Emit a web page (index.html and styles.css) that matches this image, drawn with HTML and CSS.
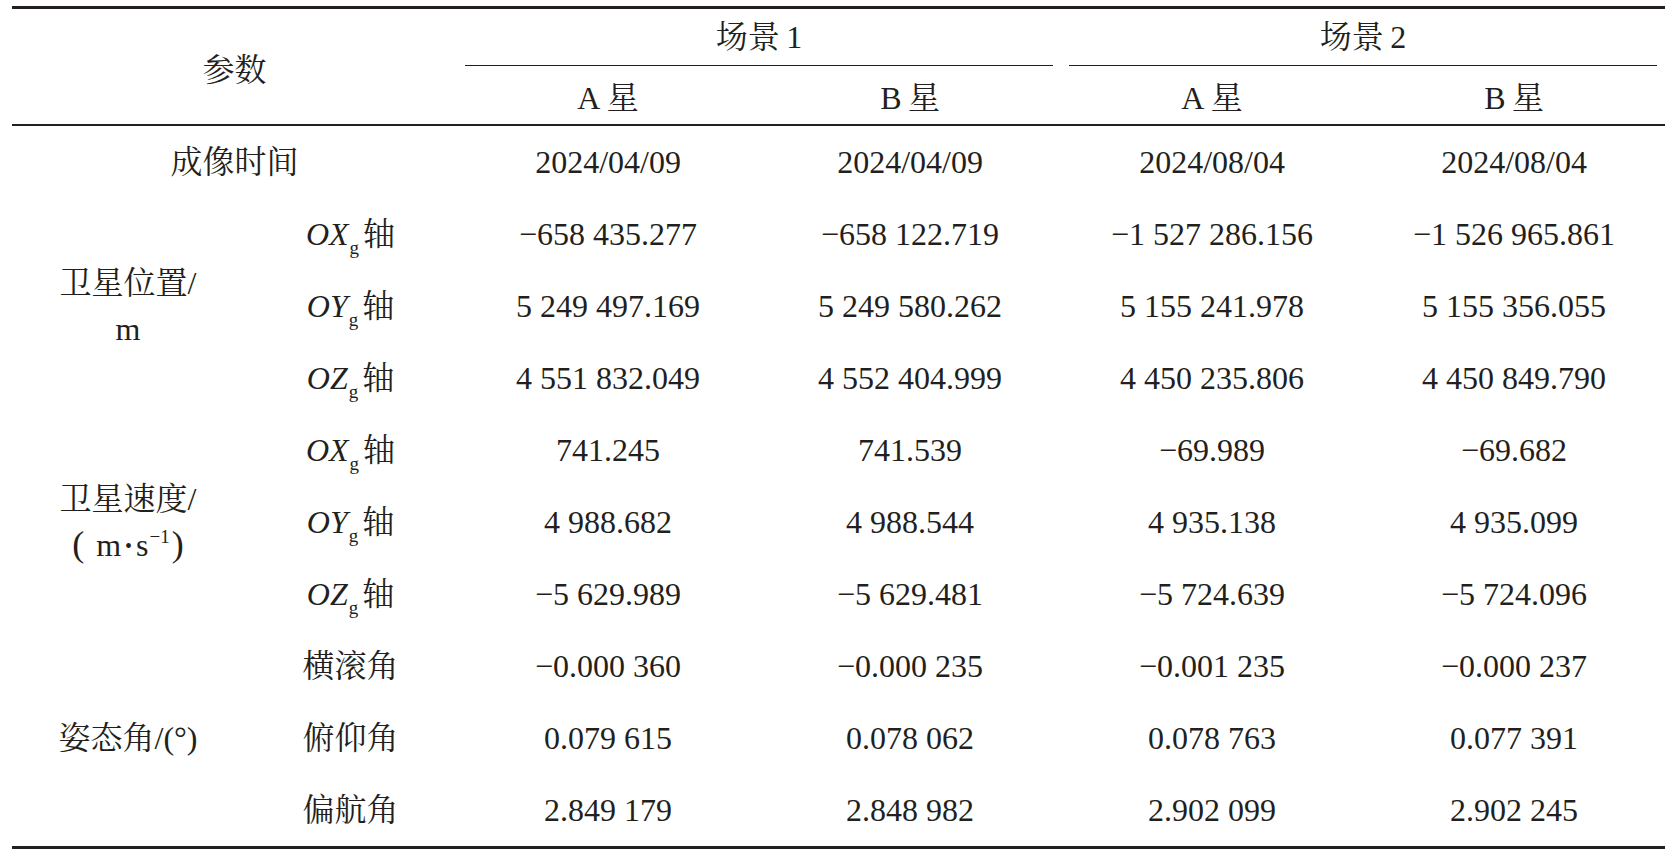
FILE: index.html
```html
<!DOCTYPE html>
<html lang="zh-CN">
<head>
<meta charset="utf-8">
<title>参数表</title>
<link rel="stylesheet" href="styles.css">
</head>
<body>
<table class="params">
  <colgroup>
    <col class="c-group"><col class="c-sub"><col class="c-data"><col class="c-data"><col class="c-data"><col class="c-data">
  </colgroup>
  <thead>
    <tr class="h1">
      <th colspan="2" rowspan="2" class="h-param">参数</th>
      <th colspan="2" class="grp"><div class="grp-label">场景&#8201;1</div></th>
      <th colspan="2" class="grp"><div class="grp-label">场景&#8201;2</div></th>
    </tr>
    <tr class="h2">
      <th>A&#8201;星</th><th>B&#8201;星</th><th>A&#8201;星</th><th>B&#8201;星</th>
    </tr>
  </thead>
  <tbody>
    <tr>
      <td colspan="2" class="lbl">成像时间</td>
      <td>2024/04/09</td><td>2024/04/09</td><td>2024/08/04</td><td>2024/08/04</td>
    </tr>
    <tr>
      <td rowspan="3" class="grp-cell">卫星位置/<br>m</td>
      <td class="sub"><i>OX</i><sub>g</sub>轴</td>
      <td>−658 435.277</td><td>−658 122.719</td><td>−1 527 286.156</td><td>−1 526 965.861</td>
    </tr>
    <tr>
      <td class="sub"><i>OY</i><sub>g</sub>轴</td>
      <td>5 249 497.169</td><td>5 249 580.262</td><td>5 155 241.978</td><td>5 155 356.055</td>
    </tr>
    <tr>
      <td class="sub"><i>OZ</i><sub>g</sub>轴</td>
      <td>4 551 832.049</td><td>4 552 404.999</td><td>4 450 235.806</td><td>4 450 849.790</td>
    </tr>
    <tr>
      <td rowspan="3" class="grp-cell">卫星速度/<br><span class="paren pl">(</span>m<span class="dot">•</span>s<sup>−1</sup><span class="paren pr">)</span></td>
      <td class="sub"><i>OX</i><sub>g</sub>轴</td>
      <td>741.245</td><td>741.539</td><td>−69.989</td><td>−69.682</td>
    </tr>
    <tr>
      <td class="sub"><i>OY</i><sub>g</sub>轴</td>
      <td>4 988.682</td><td>4 988.544</td><td>4 935.138</td><td>4 935.099</td>
    </tr>
    <tr>
      <td class="sub"><i>OZ</i><sub>g</sub>轴</td>
      <td>−5 629.989</td><td>−5 629.481</td><td>−5 724.639</td><td>−5 724.096</td>
    </tr>
    <tr>
      <td rowspan="3" class="grp-cell">姿态角/(°)</td>
      <td class="sub">横滚角</td>
      <td>−0.000 360</td><td>−0.000 235</td><td>−0.001 235</td><td>−0.000 237</td>
    </tr>
    <tr>
      <td class="sub">俯仰角</td>
      <td>0.079 615</td><td>0.078 062</td><td>0.078 763</td><td>0.077 391</td>
    </tr>
    <tr>
      <td class="sub">偏航角</td>
      <td>2.849 179</td><td>2.848 982</td><td>2.902 099</td><td>2.902 245</td>
    </tr>
  </tbody>
</table>
</body>
</html>
```
FILE: styles.css
```css
html, body {
  margin: 0;
  padding: 0;
  background: #ffffff;
}

body {
  padding: 6px 0 0 12px;
  color: #231f20;
  font-family: "Liberation Serif", "Noto Serif CJK SC", "Noto Sans CJK SC", serif;
  font-size: 32px;
}

.params {
  border-collapse: collapse;
  table-layout: fixed;
  width: 1653px;
  border-top: 3px solid #231f20;
  border-bottom: 3px solid #231f20;
}

.c-group { width: 232px; }
.c-sub { width: 213px; }
.c-data { width: 302px; }

.params thead {
  border-bottom: 2px solid #231f20;
}

.params th,
.params td {
  padding: 0;
  text-align: center;
  vertical-align: middle;
  font-weight: normal;
  white-space: nowrap;
}

.h1 th { height: 57px; }
.h2 th { height: 58px; }

.grp {
  padding: 0 8px !important;
  vertical-align: bottom !important;
}

.grp-label {
  height: 56px;
  line-height: 56px;
  border-bottom: 1.5px solid #231f20;
}

.params tbody td {
  height: 72px;
  line-height: 46px;
}

.grp-cell {
  line-height: 46px;
}

.params i {
  font-style: italic;
}

.params sub {
  font-size: 19px;
  line-height: 0;
  vertical-align: -9px;
  margin: 0 4px 0 1px;
}

.params sup {
  font-size: 19px;
  line-height: 0;
  vertical-align: 13px;
  margin-left: 1px;
}

.paren {
  font-size: 36px;
  line-height: 0;
}

.pl { margin-right: 12px; }
.pr { margin-left: 2px; }

.dot {
  font-size: 20px;
  margin: 0 4px;
  vertical-align: 3px;
  line-height: 0;
}
```
